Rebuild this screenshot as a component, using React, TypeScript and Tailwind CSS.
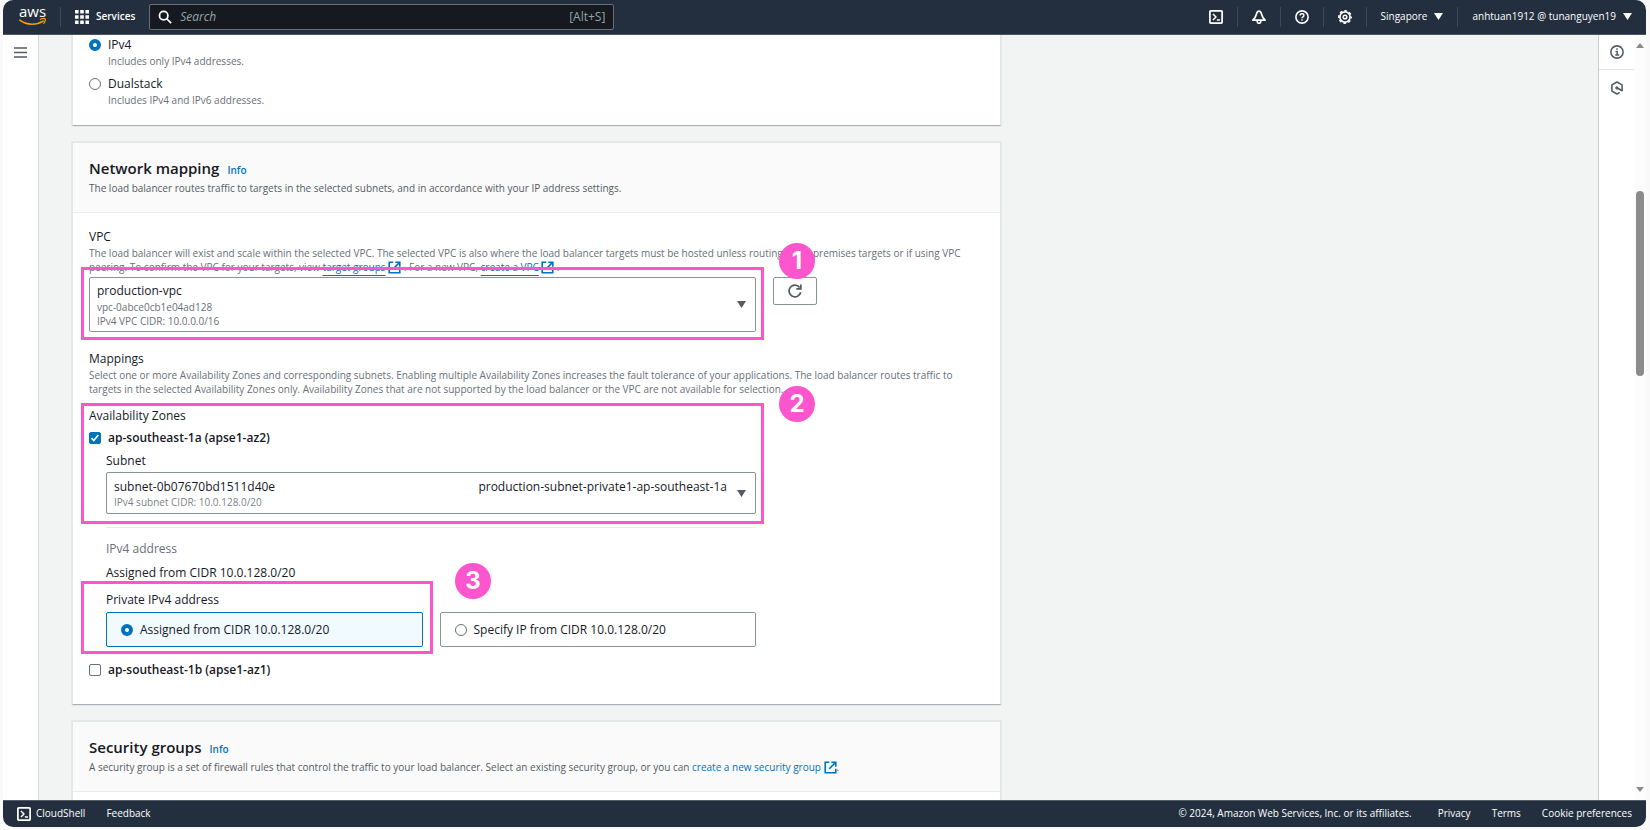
import type { ReactNode } from 'react';

const ANNOTATION = 'pointer-events-none absolute z-10 border-3 border-[#fd55cd]';
const BADGE =
  "pointer-events-none absolute z-20 flex size-9 items-center justify-center rounded-full bg-[#fd55cd] font-['Inter',sans-serif] text-2xl font-bold text-white";

function Logo() {
  return (
    <svg width="28" height="20" viewBox="0 0 28 20" className="overflow-visible" aria-label="aws" role="img">
      <text x="13.5" y="10" textAnchor="middle" fill="#fff" fontFamily="Open Sans, sans-serif" fontWeight="500" fontSize="15">aws</text>
      <path d="M.8 13.2C4 15.700 8.300 17.200 13 17.200c3.900 0 7.900-1.100 11.100-3.100" fill="none" stroke="#ff9900" strokeWidth="1.600" strokeLinecap="round" />
      <path d="M21.300 12.300c1.700-.9 4.200-1 4.900-.5.5.6-.1 3-1.400 4.500" fill="none" stroke="#ff9900" strokeWidth="1.200" strokeLinecap="round" />
    </svg>
  );
}

function Icon({ children, size = 14, className = '' }: { children: ReactNode; size?: number; className?: string }) {
  return (
    <svg width={size} height={size} viewBox="0 0 16 16" fill="none" stroke="currentColor" strokeWidth="2" strokeLinejoin="round" className={className} aria-hidden="true">
      {children}
    </svg>
  );
}

const TerminalIcon = () => (
  <Icon>
    <rect x="1" y="1" width="14" height="14" rx="1" />
    <path d="m4.500 4.500 3.500 3.500-3.500 3.500M9 11.500h3.500" strokeWidth="1.700" />
  </Icon>
);

const BellIcon = () => (
  <Icon>
    <path d="M8 1.200C6.300 1.200 5.600 2.600 5.200 4.500 4.600 7.500 3.300 9.500 1 11.500h14c-2.300-2-3.600-4-4.200-7C10.400 2.600 9.700 1.200 8 1.200Z" />
    <path d="M6 12v1.200a2 2 0 0 0 4 0V12" strokeWidth="1.800" />
  </Icon>
);

const HelpIcon = () => (
  <Icon>
    <circle cx="8" cy="8" r="7" strokeWidth="1.800" />
    <path d="M5.800 6.300C5.800 5 6.700 4.200 8 4.200s2.200.8 2.200 2c0 1.600-2.200 1.700-2.200 3.300M8 10.700v1.700" strokeWidth="1.600" />
  </Icon>
);

const GearIcon = () => (
  <Icon>
    <circle cx="8" cy="8" r="5.800" strokeWidth="1.900" />
    <circle cx="8" cy="8" r="7.100" strokeWidth="1.700" strokeDasharray="3.100 2.476" strokeDashoffset="1.550" />
    <circle cx="8" cy="8" r="2.100" strokeWidth="1.700" />
  </Icon>
);

const InfoIcon = () => (
  <Icon>
    <circle cx="8" cy="8" r="7" strokeWidth="1.800" />
    <path d="M6.300 7.300H8.200v4M6 11.500h4.500M8 3.700v1.800" strokeWidth="1.700" />
  </Icon>
);

const HexIcon = () => (
  <Icon>
    <path d="M13.800 10.500v-6L8 1.200 2.200 4.500v7L8 14.800l3-1.800" strokeWidth="1.800" />
    <circle cx="7.800" cy="7.800" r="1.800" fill="currentColor" stroke="none" />
    <path d="m8 8 6.500 3.300" strokeWidth="2" />
  </Icon>
);

const ExternalIcon = () => (
  <Icon size={13} className="inline-block align-[-3px]">
    <path d="M6.500 1.500h-5v13h13v-5" strokeLinejoin="miter" />
    <path d="M9 1.500h5.500V7M14 2 6.500 9.500" strokeLinejoin="miter" />
  </Icon>
);

function Caret({ className = '' }: { className?: string }) {
  return (
    <svg width="9" height="7" viewBox="0 0 9 7" className={className} aria-hidden="true">
      <path d="M0 0h9L4.500 7z" fill="currentColor" />
    </svg>
  );
}

const Divider = () => <span className="h-5 w-px bg-[#3d4856]" />;

const RADIO =
  'size-3 shrink-0 appearance-none rounded-full border border-[#687078] bg-white checked:border-4 checked:border-[#0073bb]';

function Description({ children }: { children: ReactNode }) {
  return <p className="mt-px text-[10px] leading-[14px] text-[#687078]">{children}</p>;
}

function TextLink({ children, underlined = false }: { children: ReactNode; underlined?: boolean }) {
  return (
    <a href="#" className="text-[#0073bb]">
      <span className={underlined ? 'underline underline-offset-4' : ''}>{children}</span> <ExternalIcon />
    </a>
  );
}

function Card({ title, description, children }: { title: string; description: ReactNode; children: ReactNode }) {
  return (
    <section className="mt-4 w-full max-w-[929px] shrink-0 border border-[#e4e7e7] border-b-[#a9b0b5] bg-white shadow-[0_0_1px_#aab7b8]">
      <header className="border-b border-[#eaeded] bg-[#fafafa] px-4 pt-[15px] pb-[17px]">
        <div className="flex items-baseline gap-2">
          <h2 className="text-[15px] leading-5 font-semibold">{title}</h2>
          <a href="#" className="text-[10px] font-semibold text-[#0073bb]">Info</a>
        </div>
        <p className="mt-[3px] text-[10px] leading-[14px] text-[#545b64]">{description}</p>
      </header>
      {children}
    </section>
  );
}

function RadioOption({ id, label, hint, checked = false }: { id: string; label: string; hint: string; checked?: boolean }) {
  return (
    <div className="flex gap-[7px]">
      <input type="radio" name="ip-type" id={id} defaultChecked={checked} className={`${RADIO} mt-0.5`} />
      <div>
        <label htmlFor={id} className="block leading-4">{label}</label>
        <Description>{hint}</Description>
      </div>
    </div>
  );
}

function ZoneCheckbox({ id, label, checked = false }: { id: string; label: string; checked?: boolean }) {
  return (
    <div className="flex items-center gap-[7px]">
      <span className="grid size-3 place-items-center">
        <input type="checkbox" id={id} defaultChecked={checked} className="peer size-3 appearance-none rounded-xs border border-[#687078] bg-white [grid-area:1/1] checked:border-[#0073bb] checked:bg-[#0073bb]" />
        <svg width="10" height="10" viewBox="0 0 10 10" className="pointer-events-none hidden [grid-area:1/1] peer-checked:block" aria-hidden="true">
          <path d="m1.500 5.200 2.300 2.300L8.300 2" fill="none" stroke="#fff" strokeWidth="1.700" />
        </svg>
      </span>
      <label htmlFor={id} className="leading-4 font-semibold">{label}</label>
    </div>
  );
}

export default function App() {
  return (
    <div className="h-screen bg-[#f9f9fa] pr-1 pb-[3px] pl-[3px] font-['Open_Sans',sans-serif] text-xs text-[#16191f]">
      <div className="flex h-full flex-col overflow-hidden rounded-[10px]">
        <header className="flex h-[35px] shrink-0 items-center border-b border-[#4b5563] bg-[#232f3e] pr-[14px] pl-4 text-[10px] font-semibold text-white">
          <a href="#" className="mr-[13px]"><Logo /></a>
          <Divider />
          <button type="button" className="ml-[14px] flex items-center gap-[7px]">
            <svg width="14" height="14" viewBox="0 0 14 14" fill="#fff" aria-hidden="true">
              <path d="M0 0h3.600v3.600H0zM5.200 0h3.600v3.600H5.200zM10.400 0H14v3.600h-3.600zM0 5.200h3.600v3.600H0zM5.200 5.200h3.600v3.600H5.200zM10.400 5.200H14v3.600h-3.600zM0 10.400h3.600V14H0zM5.200 10.400h3.600V14H5.200zM10.400 10.400H14V14h-3.600z" />
            </svg>
            Services
          </button>
          <div className="ml-[14px] flex h-[26px] w-[465px] items-center rounded-xs border border-[#687078] bg-[#16191f] px-2 text-xs font-normal text-[#95a5a6]">
            <Icon size={14} className="mr-2 shrink-0 text-white">
              <circle cx="6.500" cy="6.500" r="4.800" />
              <path d="m10 10 5 5" />
            </Icon>
            <input type="search" aria-label="Search" placeholder="Search" className="min-w-0 flex-1 bg-transparent outline-none placeholder:text-[#95a5a6] placeholder:italic" />
            <span>[Alt+S]</span>
          </div>
          <div className="ml-auto flex items-center gap-[14px]">
            <button type="button" aria-label="CloudShell"><TerminalIcon /></button>
            <Divider />
            <button type="button" aria-label="Notifications"><BellIcon /></button>
            <Divider />
            <button type="button" aria-label="Help"><HelpIcon /></button>
            <Divider />
            <button type="button" aria-label="Settings"><GearIcon /></button>
            <Divider />
            <button type="button" className="flex items-center gap-[7px] font-medium">Singapore <Caret /></button>
            <Divider />
            <button type="button" className="flex items-center gap-[7px] font-medium">anhtuan1912 @ tunanguyen19 <Caret /></button>
          </div>
        </header>

        <div className="flex min-h-0 flex-1">
          <nav className="w-9 shrink-0 border-r border-[#d5dbdb] bg-white pt-[11px] pl-[11px] text-[#545b64]">
            <button type="button" aria-label="Open navigation" className="block">
              <Icon size={13}><path d="M0 2.500h16M0 8h16M0 13.500h16" /></Icon>
            </button>
          </nav>

          <main className="flex min-w-0 flex-1 flex-col overflow-hidden bg-[#f2f3f3] pl-[33px]">
            <section className="w-full max-w-[929px] shrink-0 border border-t-0 border-[#e4e7e7] border-b-[#a9b0b5] bg-white px-4 pt-0.5 pb-[18px] shadow-[0_0_1px_#aab7b8]">
              <div className="flex flex-col gap-2">
                <RadioOption id="ipv4" label="IPv4" hint="Includes only IPv4 addresses." checked />
                <RadioOption id="dualstack" label="Dualstack" hint="Includes IPv4 and IPv6 addresses." />
              </div>
            </section>

            <Card
              title="Network mapping"
              description="The load balancer routes traffic to targets in the selected subnets, and in accordance with your IP address settings."
            >
              <div className="px-4 pt-4 pb-[26px]">
                <label htmlFor="vpc" className="block leading-4">VPC</label>
                <Description>
                  The load balancer will exist and scale within the selected VPC. The selected VPC is also where the load balancer targets must be hosted unless routing to on-premises targets or if using VPC peering. To confirm the VPC for your targets, view <TextLink underlined>target groups</TextLink> . For a new VPC, <TextLink underlined>create a VPC</TextLink> .
                </Description>

                <div className="mt-[3px] grid grid-cols-12 items-start gap-[17px]">
                  <div className="relative col-span-9 grid">
                    <select id="vpc" className="h-[55px] w-full appearance-none rounded-xs border border-[#879596] bg-white px-[7px] pb-7 [grid-area:1/1]">
                      <option>production-vpc</option>
                    </select>
                    <div className="pointer-events-none flex items-center justify-between pr-[10px] pl-2 [grid-area:1/1]">
                      <p className="pt-[18px] text-[10px] leading-[14px] text-[#687078]">
                        vpc-0abce0cb1e04ad128<br />IPv4 VPC CIDR: 10.0.0.0/16
                      </p>
                      <Caret className="text-[#545b64]" />
                    </div>
                    <div className={`${ANNOTATION} -inset-x-2 -top-[10px] -bottom-2`} />
                    <span className={`${BADGE} -top-[34px] left-[690px]`}>1</span>
                  </div>
                  <button type="button" aria-label="Refresh" className="col-span-3 flex h-7 w-11 items-center justify-center rounded-xs border border-[#879596] text-[#545b64]">
                    <Icon>
                      <path d="M14.500 9.500A6.700 6.700 0 1 1 13.300 4" />
                      <path d="M14.700.5v5H9.500" strokeLinejoin="miter" />
                    </Icon>
                  </button>
                </div>

                <h3 className="mt-[19px] leading-4">Mappings</h3>
                <Description>
                  Select one or more Availability Zones and corresponding subnets. Enabling multiple Availability Zones increases the fault tolerance of your applications. The load balancer routes traffic to targets in the selected Availability Zones only. Availability Zones that are not supported by the load balancer or the VPC are not available for selection.
                </Description>

                <div className="mt-3 grid grid-cols-12 gap-x-[17px]">
                  <div className="col-span-9">
                    <div className="relative">
                      <h3 className="mb-[6px] leading-4">Availability Zones</h3>
                      <ZoneCheckbox id="az-1a" label="ap-southeast-1a (apse1-az2)" checked />
                      <div className="mt-[7px] pl-[17px]">
                        <label htmlFor="subnet" className="block leading-4">Subnet</label>
                        <div className="mt-[3px] grid">
                          <select id="subnet" className="h-[42px] w-full appearance-none rounded-xs border border-[#879596] bg-white px-[7px] pb-3 [grid-area:1/1]">
                            <option>subnet-0b07670bd1511d40e</option>
                          </select>
                          <div className="pointer-events-none flex items-center pr-[10px] pl-2 [grid-area:1/1]">
                            <span className="flex-1 pt-[18px] text-[10px] leading-[14px] text-[#7b8589]">IPv4 subnet CIDR: 10.0.128.0/20</span>
                            <span className="pb-3 leading-4">production-subnet-private1-ap-southeast-1a</span>
                            <Caret className="ml-[10px] text-[#545b64]" />
                          </div>
                        </div>
                      </div>
                      <div className={`${ANNOTATION} -inset-x-2 -top-[5px] -bottom-[10px]`} />
                      <span className={`${BADGE} -top-[22px] left-[690px]`}>2</span>
                    </div>

                    <div className="mt-[13px] ml-[17px] border-t border-[#eaeded] pt-[13px]">
                      <h4 className="leading-4 text-[#687078]">IPv4 address</h4>
                      <p className="mt-2 leading-4">Assigned from CIDR 10.0.128.0/20</p>
                      <div role="radiogroup" aria-labelledby="private-ip-label" className="relative mt-[11px]">
                        <h4 id="private-ip-label" className="leading-4">Private IPv4 address</h4>
                        <div className="mt-1 grid grid-cols-2 gap-[17px]">
                          <label className="flex h-[35px] items-center gap-[7px] rounded-xs border border-[#0073bb] bg-[#f1faff] px-[14px]">
                            <input type="radio" name="private-ip" defaultChecked className={RADIO} />
                            Assigned from CIDR 10.0.128.0/20
                          </label>
                          <label className="flex h-[35px] items-center gap-[7px] rounded-xs border border-[#879596] px-[14px]">
                            <input type="radio" name="private-ip" className={RADIO} />
                            Specify IP from CIDR 10.0.128.0/20
                          </label>
                        </div>
                        <div className={`${ANNOTATION} -top-[11px] -bottom-[7px] -left-[25px] w-[352px]`} />
                        <span className={`${BADGE} -top-[29px] left-[349px]`}>3</span>
                      </div>
                    </div>

                    <div className="mt-[15px]">
                      <ZoneCheckbox id="az-1b" label="ap-southeast-1b (apse1-az1)" />
                    </div>
                  </div>
                </div>
              </div>
            </Card>

            <Card
              title="Security groups"
              description={<>A security group is a set of firewall rules that control the traffic to your load balancer. Select an existing security group, or you can <TextLink>create a new security group</TextLink>.</>}
            >
              <div className="h-10" />
            </Card>
          </main>

          <aside className="flex w-9 shrink-0 flex-col items-stretch border-l border-[#c8cfcf] bg-white text-[#545b64]">
            <button type="button" aria-label="Info" className="flex h-[35px] items-center justify-center border-b border-[#e1e5e5]"><InfoIcon /></button>
            <button type="button" aria-label="Tutorials" className="flex h-[35px] items-center justify-center"><HexIcon /></button>
          </aside>
          <div className="flex w-3 shrink-0 flex-col items-center bg-[#fcfcfc] py-2 text-[#8b8b8b]" aria-hidden="true">
            <svg width="8" height="5" viewBox="0 0 8 5"><path d="M4 0 8 5H0z" fill="currentColor" /></svg>
            <div className="mt-[143px] h-[185px] w-2 rounded-full bg-[#8b8b8b]" />
            <svg width="8" height="5" viewBox="0 0 8 5" className="mt-auto"><path d="M0 0h8L4 5z" fill="currentColor" /></svg>
          </div>
        </div>

        <footer className="flex h-[27px] shrink-0 items-center border-t border-[#545b64] bg-[#232f3e] px-[14px] text-[10px] font-medium text-white">
          <button type="button" className="flex items-center gap-[5px]"><TerminalIcon /> CloudShell</button>
          <a href="#" className="ml-[21px]">Feedback</a>
          <span className="ml-auto">© 2024, Amazon Web Services, Inc. or its affiliates.</span>
          <a href="#" className="ml-[26px]">Privacy</a>
          <a href="#" className="ml-[21px]">Terms</a>
          <a href="#" className="ml-[21px]">Cookie preferences</a>
        </footer>
      </div>
    </div>
  );
}
